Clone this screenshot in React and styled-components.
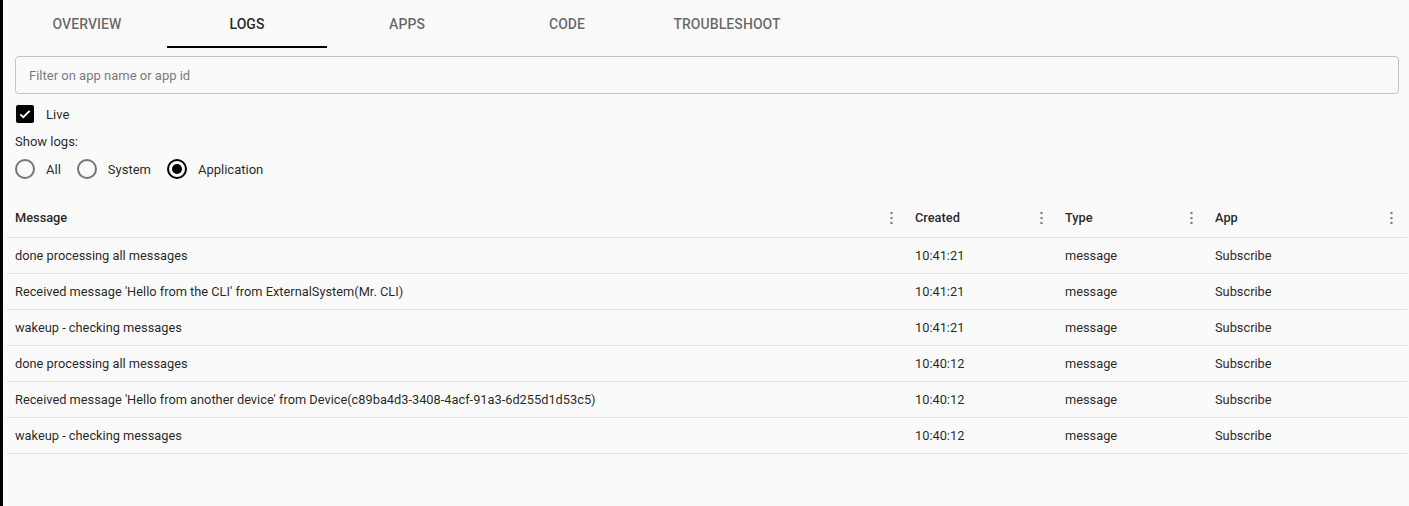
import React, { useState } from 'react';
import styled, { createGlobalStyle } from 'styled-components';

const GlobalStyle = createGlobalStyle`
  html, body {
    margin: 0;
    padding: 0;
    background: #fafafa;
    font-family: Roboto, "Noto Sans", Arial, sans-serif;
    color: rgba(0, 0, 0, 0.87);
  }
  * { box-sizing: border-box; }
`;

const Page = styled.div`
  min-height: 506px;
  border-left: 3px solid #000;
  padding: 0 2px 0 4px;
  background: #fafafa;
`;

const TabBar = styled.div`
  display: flex;
  height: 48px;
`;

const Tab = styled.button`
  width: 160px;
  height: 48px;
  border: none;
  background: transparent;
  font-family: Roboto, sans-serif;
  font-size: 14px;
  font-weight: 500;
  letter-spacing: 0.005em;
  text-transform: uppercase;
  color: ${({ $active }) => ($active ? 'rgba(0,0,0,0.87)' : 'rgba(0,0,0,0.6)')};
  border-bottom: 2px solid ${({ $active }) => ($active ? '#000' : 'transparent')};
  padding: 2px 0 0;
  cursor: pointer;
`;

const Controls = styled.div`
  padding: 8px 8px 0;
  display: flex;
  flex-direction: column;
`;

const FilterInput = styled.input`
  width: 100%;
  height: 38px;
  border: 1px solid #c4c4c4;
  border-radius: 4px;
  background: transparent;
  padding: 0 13px;
  font-family: Roboto, sans-serif;
  font-size: 13px;
  color: rgba(0,0,0,0.87);
  outline: none;
  &::placeholder {
    color: #7a7a7a;
  }
`;

const OptionRow = styled.label`
  display: flex;
  align-items: center;
  height: 28px;
  font-size: 13px;
  cursor: pointer;
`;

const LiveRow = styled(OptionRow)`
  margin-top: 6px;
`;

const BoxMark = styled.span`
  width: 18px;
  height: 18px;
  margin: 0 12px 0 1px;
  border-radius: 2px;
  background: ${({ $checked }) => ($checked ? '#000' : 'transparent')};
  border: 2px solid ${({ $checked }) => ($checked ? '#000' : '#757575')};
  display: flex;
  align-items: center;
  justify-content: center;
`;

const Caption = styled.div`
  font-size: 13px;
  line-height: 20px;
  margin-top: 4px;
`;

const RadioGroup = styled.div`
  display: flex;
  gap: 16px;
  margin-top: 3px;
`;

const RadioMark = styled.span`
  width: 20px;
  height: 20px;
  border-radius: 50%;
  border: 2px solid ${({ $checked }) => ($checked ? '#000' : '#757575')};
  margin-right: 11px;
  display: flex;
  align-items: center;
  justify-content: center;
  &::after {
    content: '';
    width: 10px;
    height: 10px;
    border-radius: 50%;
    background: #000;
    display: ${({ $checked }) => ($checked ? 'block' : 'none')};
  }
`;

const Table = styled.div`
  margin-top: 15px;
`;

const HeaderRow = styled.div`
  display: grid;
  grid-template-columns: 900px 150px 150px 1fr;
  height: 40px;
  border-bottom: 1px solid #e0e0e0;
`;

const Row = styled.div`
  display: grid;
  grid-template-columns: 900px 150px 150px 1fr;
  height: 36px;
  border-bottom: 1px solid #e0e0e0;
`;

const HeadCell = styled.div`
  display: flex;
  align-items: center;
  justify-content: space-between;
  padding: 0 14px 0 8px;
  font-size: 12.8px;
  font-weight: 500;
  color: rgba(0,0,0,0.87);
`;

const Cell = styled.div`
  display: flex;
  align-items: center;
  padding: 0 8px;
  font-size: 12.8px;
  color: rgba(0,0,0,0.87);
  white-space: nowrap;
`;

const Check = () => (
  <svg width="14" height="14" viewBox="0 0 24 24">
    <path d="M4 12.5l5 5L20 6.5" fill="none" stroke="#fff" strokeWidth="3.2" />
  </svg>
);

const MoreVert = () => (
  <svg width="3" height="14" viewBox="0 0 3 14">
    <rect x="0.5" y="1" width="2" height="2" fill="#8a6a5a" />
    <rect x="0.5" y="6" width="2" height="2" fill="#6a7a9a" />
    <rect x="0.5" y="11" width="2" height="2" fill="#8a6a5a" />
  </svg>
);

const tabs = ['Overview', 'Logs', 'Apps', 'Code', 'Troubleshoot'];

const logs = [
  { message: 'done processing all messages', created: '10:41:21' },
  { message: "Received message 'Hello from the CLI' from ExternalSystem(Mr. CLI)", created: '10:41:21' },
  { message: 'wakeup - checking messages', created: '10:41:21' },
  { message: 'done processing all messages', created: '10:40:12' },
  { message: "Received message 'Hello from another device' from Device(c89ba4d3-3408-4acf-91a3-6d255d1d53c5)", created: '10:40:12' },
  { message: 'wakeup - checking messages', created: '10:40:12' },
];

const columns = ['Message', 'Created', 'Type', 'App'];

const App = () => {
  const [live, setLive] = useState(true);
  const [source, setSource] = useState('Application');

  return (
    <Page>
      <GlobalStyle />
      <TabBar>
        {tabs.map((t) => (
          <Tab key={t} $active={t === 'Logs'}>{t}</Tab>
        ))}
      </TabBar>
      <Controls>
        <FilterInput placeholder="Filter on app name or app id" />
        <LiveRow onClick={() => setLive(!live)}>
          <BoxMark $checked={live}>{live && <Check />}</BoxMark>
          Live
        </LiveRow>
        <Caption>Show logs:</Caption>
        <RadioGroup>
          {['All', 'System', 'Application'].map((s) => (
            <OptionRow key={s} onClick={() => setSource(s)}>
              <RadioMark $checked={source === s} />
              {s}
            </OptionRow>
          ))}
        </RadioGroup>
      </Controls>
      <Table>
        <HeaderRow>
          {columns.map((c) => (
            <HeadCell key={c}>
              {c}
              <MoreVert />
            </HeadCell>
          ))}
        </HeaderRow>
        {logs.map((log, i) => (
          <Row key={i}>
            <Cell>{log.message}</Cell>
            <Cell>{log.created}</Cell>
            <Cell>message</Cell>
            <Cell>Subscribe</Cell>
          </Row>
        ))}
      </Table>
    </Page>
  );
};

export default App;
